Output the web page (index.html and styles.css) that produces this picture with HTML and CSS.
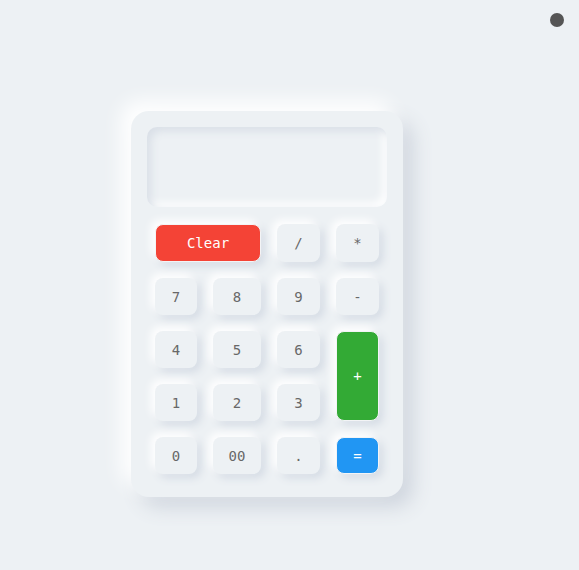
FILE: index.html
```html
<!DOCTYPE html>
<html>
<head>
<meta charset="utf-8">
<link rel="stylesheet" href="styles.css">
</head>
<body>
<span class="dot"></span>
<main class="stage">
  <div class="calc">
    <div class="display"></div>
    <div class="keys">
      <button class="key key-clear">Clear</button>
      <button class="key">/</button>
      <button class="key">*</button>
      <button class="key">7</button>
      <button class="key">8</button>
      <button class="key">9</button>
      <button class="key">-</button>
      <button class="key">4</button>
      <button class="key">5</button>
      <button class="key">6</button>
      <button class="key key-plus">+</button>
      <button class="key">1</button>
      <button class="key">2</button>
      <button class="key">3</button>
      <button class="key">0</button>
      <button class="key">00</button>
      <button class="key">.</button>
      <button class="key key-eq">=</button>
    </div>
  </div>
</main>
</body>
</html>
```
FILE: styles.css
```css
html, body {
  margin: 0;
  padding: 0;
  background: #edf1f4;
  height: 100%;
}
body {
  font-family: "DejaVu Sans Mono", monospace;
  position: relative;
}
.dot {
  position: absolute;
  top: 13px;
  left: 550px;
  width: 14px;
  height: 14px;
  border-radius: 50%;
  background: #555;
}
.stage {
  padding: 111px 0 0 131px;
}
.calc {
  width: 240px;
  padding: 16px 16px 23px;
  border-radius: 18px;
  background: #edf1f4;
  box-shadow: -10px -10px 20px #ffffff, 10px 10px 20px #cfd5de;
}
.display {
  height: 80px;
  border-radius: 10px;
  background: #edf1f4;
  box-shadow: inset 4px 4px 8px #d9dfe7, inset -4px -4px 8px #ffffff;
}
.keys {
  display: grid;
  grid-template-columns: 42px 48px 43px 43px;
  grid-template-rows: 38px repeat(4, 37px);
  column-gap: 16px;
  row-gap: 16px;
  padding: 17px 8px 0;
}
.key {
  border: none;
  border-radius: 8px;
  background: #edf1f4;
  font-family: "DejaVu Sans Mono", monospace;
  font-size: 14px;
  color: #686868;
  padding: 0;
  box-shadow: -4px -4px 8px #ffffff, 4px 4px 8px #d4dbe4;
}
.key-clear {
  grid-column: span 2;
  background: #f44336;
  color: #fff;
  border: 1px solid #f3f4f6;
}
.key-plus {
  grid-row: span 2;
  background: #33aa35;
  color: #fff;
  border: 1px solid #f3f4f6;
}
.key-eq {
  background: #2196f3;
  color: #fff;
  border: 1px solid #f3f4f6;
}
```
